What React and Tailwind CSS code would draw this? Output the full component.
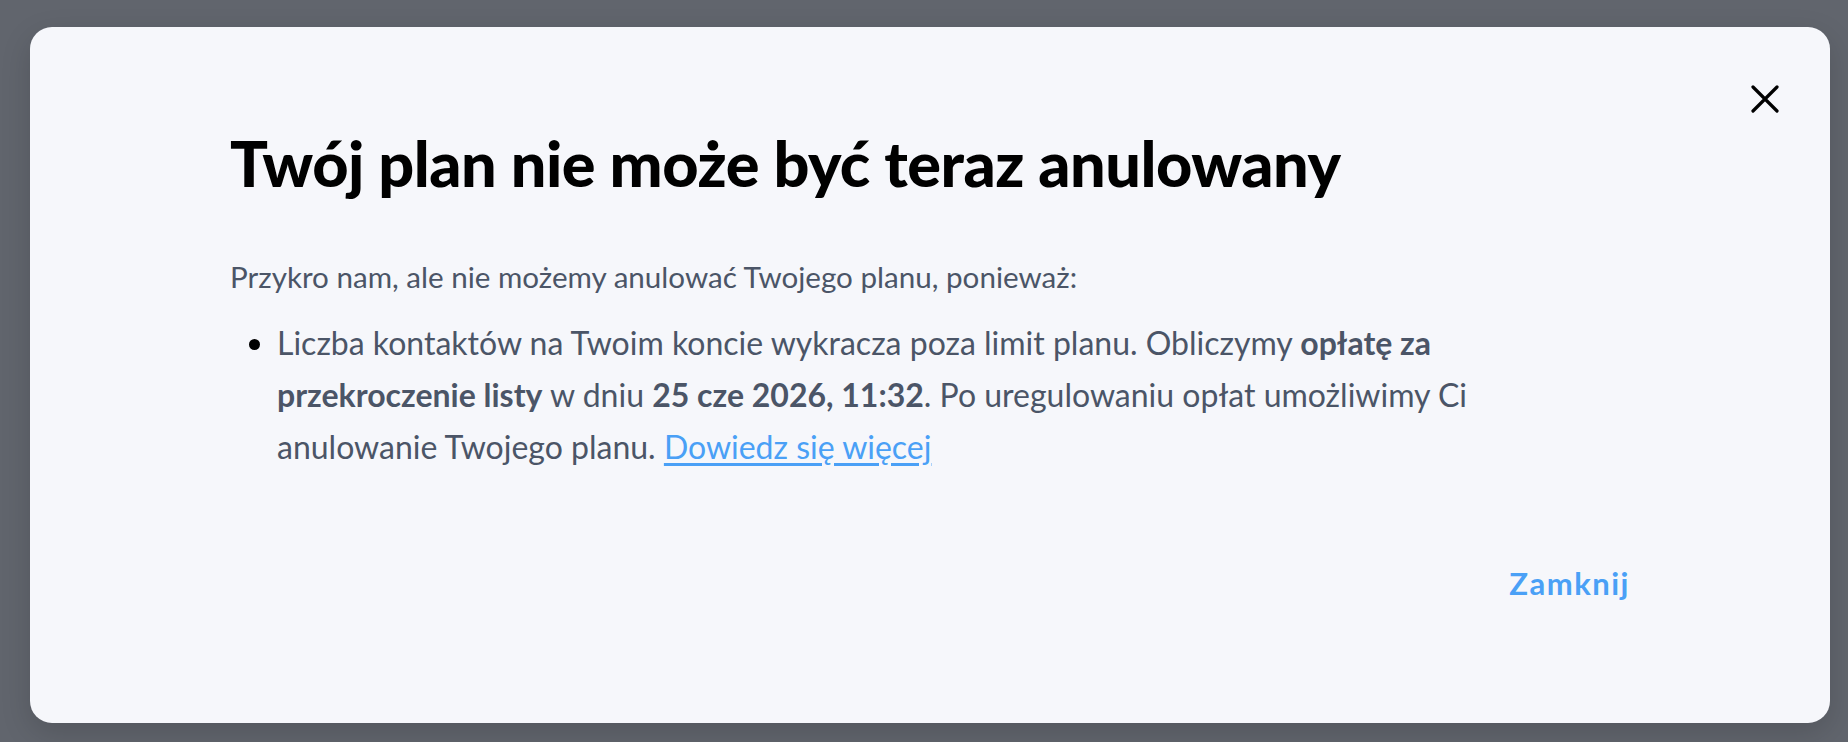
import React from "react";

const CloseIcon = () => (
  <svg width="28" height="28" viewBox="0 0 28 28" fill="none">
    <path
      d="M2 2L26 26M26 2L2 26"
      stroke="#000"
      strokeWidth="3.2"
      strokeLinecap="round"
    />
  </svg>
);

const CancelPlanModal = () => {
  return (
    <div
      className="relative w-[1800px] h-[696px] rounded-[22px] bg-[#f6f7fb] shadow-[0_10px_30px_rgba(0,0,0,0.15)] px-[200px] pt-[100px] flex flex-col"
      style={{ fontFamily: '"Lato", "Noto Sans", sans-serif' }}
    >
      {/* Close button */}
      <button className="absolute top-[58px] right-[51px] p-0">
        <CloseIcon />
      </button>

      <h1 className="text-[63px] leading-[72px] font-black text-black tracking-[-0.5px]">
        Twój plan nie może być teraz anulowany
      </h1>

      <p className="mt-[58px] text-[29.6px] leading-[40px] text-[#4b5567]">
        Przykro nam, ale nie możemy anulować Twojego planu, ponieważ:
      </p>

      <ul className="mt-[20px] mr-[95px] list-disc pl-[47px] text-[32px] leading-[52px] text-[#4b5567] marker:text-black">
        <li>
          <span>
            Liczba kontaktów na Twoim koncie wykracza poza limit planu. Obliczymy
          </span>{" "}
          <strong className="font-bold">opłatę za</strong>{" "}
          <strong className="font-bold">przekroczenie listy</strong>{" "}
          <span>w dniu</span>{" "}
          <strong className="font-bold">25 cze 2026, 11:32</strong>
          <span>. Po uregulowaniu opłat umożliwimy Ci</span>{" "}
          <span>anulowanie Twojego planu.</span>{" "}
          <a href="#" className="text-[#4aa0f6] underline underline-offset-4">
            Dowiedz się więcej
          </a>
        </li>
      </ul>

      <div className="mt-auto mb-[120px] flex justify-end">
        <button className="text-[31px] leading-[40px] font-bold text-[#4aa0f6] tracking-[1.5px]">
          Zamknij
        </button>
      </div>
    </div>
  );
};

export default function App() {
  return (
    <div className="w-[1848px] h-[742px] bg-[#61656d] pt-[27px] pl-[30px] overflow-hidden">
      <CancelPlanModal />
    </div>
  );
}
